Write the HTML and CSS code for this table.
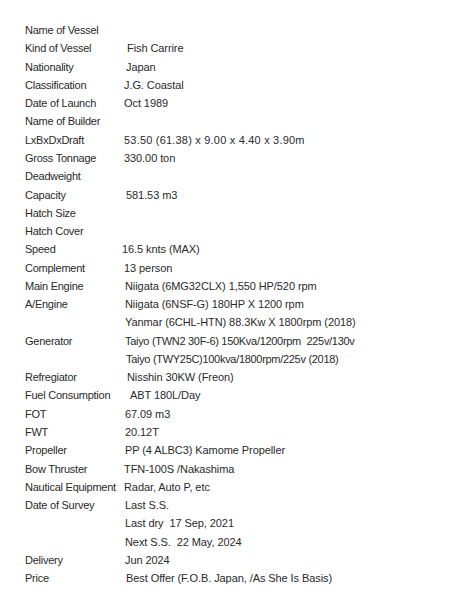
FILE: index.html
```html
<!DOCTYPE html>
<html>
<head>
<meta charset="utf-8">
<link rel="stylesheet" href="styles.css">
</head>
<body>
<div class="spec">
  <div class="k">Name of Vessel</div><div class="v"></div>
  <div class="k">Kind of Vessel</div><div class="v i3">Fish Carrire</div>
  <div class="k">Nationality</div><div class="v i2">Japan</div>
  <div class="k">Classification</div><div class="v">J.G. Coastal</div>
  <div class="k">Date of Launch</div><div class="v">Oct 1989</div>
  <div class="k">Name of Builder</div><div class="v"></div>
  <div class="k">LxBxDxDraft</div><div class="v wide">53.50 (61.38) x 9.00 x 4.40 x 3.90m</div>
  <div class="k">Gross Tonnage</div><div class="v">330.00 ton</div>
  <div class="k">Deadweight</div><div class="v"></div>
  <div class="k">Capacity</div><div class="v i2">581.53 m3</div>
  <div class="k">Hatch Size</div><div class="v"></div>
  <div class="k">Hatch Cover</div><div class="v"></div>
  <div class="k">Speed</div><div class="v o2">16.5 knts (MAX)</div>
  <div class="k">Complement</div><div class="v">13 person</div>
  <div class="k">Main Engine</div><div class="v i1">Niigata (6MG32CLX) 1,550 HP/520 rpm</div>
  <div class="k">A/Engine</div><div class="v i1">Niigata (6NSF-G) 180HP X 1200 rpm</div>
  <div class="k"></div><div class="v i1">Yanmar (6CHL-HTN) 88.3Kw X 1800rpm (2018)</div>
  <div class="k">Generator</div><div class="v i1 tight">Taiyo (TWN2 30F-6) 150Kva/1200rpm  225v/130v</div>
  <div class="k"></div><div class="v i2 tight">Taiyo (TWY25C)100kva/1800rpm/225v (2018)</div>
  <div class="k">Refregiator</div><div class="v i3">Nisshin 30KW (Freon)</div>
  <div class="k">Fuel Consumption</div><div class="v i6">ABT 180L/Day</div>
  <div class="k">FOT</div><div class="v i1">67.09 m3</div>
  <div class="k">FWT</div><div class="v i1">20.12T</div>
  <div class="k">Propeller</div><div class="v i1">PP (4 ALBC3) Kamome Propeller</div>
  <div class="k">Bow Thruster</div><div class="v">TFN-100S /Nakashima</div>
  <div class="k">Nautical Equipment</div><div class="v">Radar, Auto P, etc</div>
  <div class="k">Date of Survey</div><div class="v i1">Last S.S.</div>
  <div class="k"></div><div class="v i1">Last dry  17 Sep, 2021</div>
  <div class="k"></div><div class="v i1">Next S.S.  22 May, 2024</div>
  <div class="k">Delivery</div><div class="v i1">Jun 2024</div>
  <div class="k">Price</div><div class="v i2">Best Offer (F.O.B. Japan, /As She Is Basis)</div>
</div>
</body>
</html>
```

FILE: styles.css
```css
html, body {
  margin: 0;
  padding: 0;
  background: #ffffff;
}
.spec {
  display: grid;
  grid-template-columns: 99px auto;
  grid-auto-rows: 18.27px;
  align-items: center;
  padding: 21px 0 0 25px;
  font-family: "Liberation Sans", Arial, sans-serif;
  font-size: 11px;
  color: #2a2a2a;
  white-space: pre;
}
.k {
  letter-spacing: -0.25px;
}
.v {
  letter-spacing: -0.08px;
}
.v.wide { letter-spacing: 0.2px; }
.v.tight { letter-spacing: -0.3px; }
.v.i1 { padding-left: 1px; }
.v.i2 { padding-left: 2px; }
.v.i3 { padding-left: 3px; }
.v.i6 { padding-left: 6px; }
.v.o2 { margin-left: -2px; }
```
